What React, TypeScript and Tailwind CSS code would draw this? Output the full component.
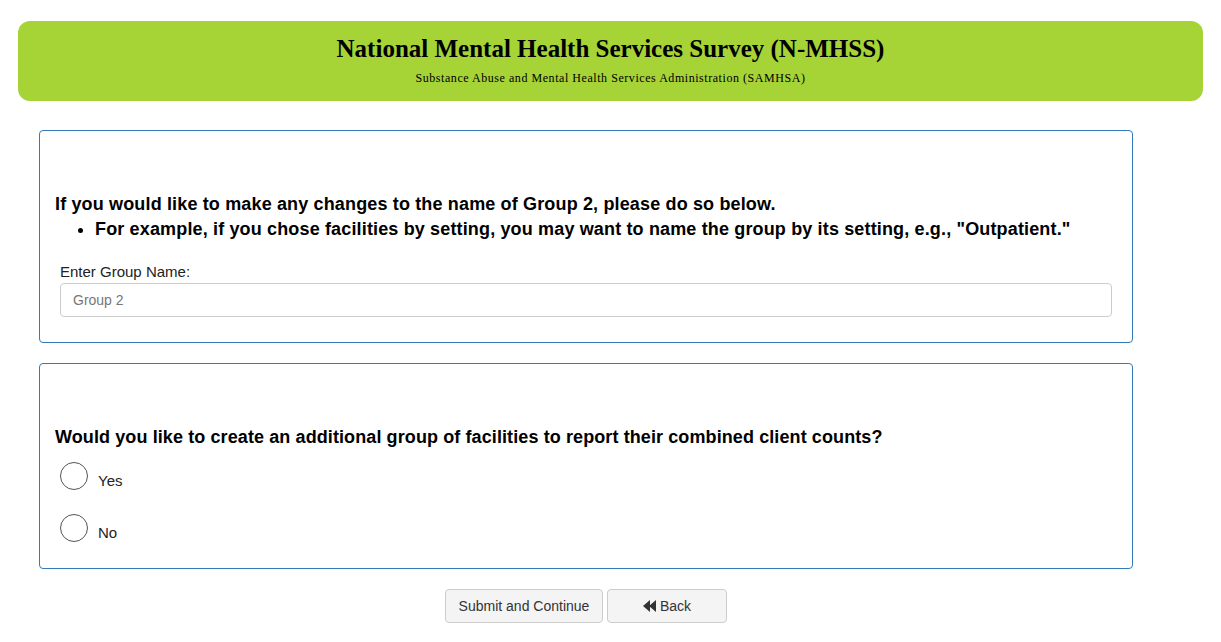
import React, { useState } from 'react';

const serif = { fontFamily: '"Liberation Serif", "Times New Roman", serif' };

function Radio({ label, checked, onChange }: { label: string; checked: boolean; onChange: () => void }) {
  return (
    <label className="flex items-center h-[28px] cursor-pointer" onClick={onChange}>
      <span className="w-[28px] h-[28px] rounded-full border border-[#555] bg-white flex items-center justify-center shrink-0">
        {checked && <span className="w-[14px] h-[14px] rounded-full bg-[#333]" />}
      </span>
      <span className="ml-[10px] mt-[10px] text-[15px] text-[#222]">{label}</span>
    </label>
  );
}

export default function App() {
  const [groupName, setGroupName] = useState('');
  const [another, setAnother] = useState<string | null>(null);

  return (
    <div className="min-h-[642px] bg-white text-black font-['Liberation_Sans',Arial,sans-serif]">
      {/* Header */}
      <div className="pt-[21px] px-[18px]">
        <div className="h-[80px] rounded-[12px] bg-[#a6d336] flex flex-col items-center" style={serif}>
          <h1 className="mt-[13px] text-[25px] leading-[30px] font-bold">National Mental Health Services Survey (N-MHSS)</h1>
          <p className="mt-[7px] text-[12px] leading-[14px] tracking-[0.55px]">Substance Abuse and Mental Health Services Administration (SAMHSA)</p>
        </div>
      </div>

      <div className="w-[1094px] ml-[39px] mt-[29px]">
        {/* Group name card */}
        <div className="h-[213px] border border-[#337ab7] rounded-[4px] px-[15px] pt-[62px]">
          <p className="text-[18px] leading-[22px] font-bold tracking-[0.15px]">
            If you would like to make any changes to the name of Group 2, please do so below.
          </p>
          <ul className="list-disc pl-[40px] mt-[3px]">
            <li className="text-[18px] leading-[22px] font-bold tracking-[0.15px]">
              For example, if you chose facilities by setting, you may want to name the group by its setting, e.g., "Outpatient."
            </li>
          </ul>
          <div className="px-[5px] mt-[22px]">
            <label className="block text-[15px] leading-[20px] text-[#222]">Enter Group Name:</label>
            <input
              value={groupName}
              onChange={(e) => setGroupName(e.target.value)}
              placeholder="Group 2"
              className="mt-[1px] w-full h-[34px] px-[12px] border border-[#ccc] rounded-[4px] text-[14px] text-[#555] placeholder:text-[#777] outline-none"
            />
          </div>
        </div>

        {/* Additional group card */}
        <div className="h-[206px] mt-[20px] border border-[#337ab7] rounded-[4px] px-[15px] pt-[62px]">
          <p className="text-[18px] leading-[22px] font-bold tracking-[0.1px]">
            Would you like to create an additional group of facilities to report their combined client counts?
          </p>
          <div className="px-[5px] mt-[14px] flex flex-col gap-[24px]">
            <Radio label="Yes" checked={another === 'yes'} onChange={() => setAnother('yes')} />
            <Radio label="No" checked={another === 'no'} onChange={() => setAnother('no')} />
          </div>
        </div>

        {/* Buttons */}
        <div className="mt-[20px] flex justify-center gap-[4px]">
          <button className="h-[34px] w-[158px] border border-[#ccc] rounded-[4px] bg-[#f4f4f4] text-[14px] text-[#333]">
            Submit and Continue
          </button>
          <button className="h-[34px] w-[120px] border border-[#ccc] rounded-[4px] bg-[#f4f4f4] text-[14px] text-[#333] flex items-center justify-center gap-[3px]">
            <svg width="14" height="12" viewBox="0 0 14 12" fill="#333">
              <path d="M7 0 L0 6 L7 12 Z" />
              <path d="M13 0 L6 6 L13 12 Z" />
            </svg>
            Back
          </button>
        </div>
      </div>
    </div>
  );
}
